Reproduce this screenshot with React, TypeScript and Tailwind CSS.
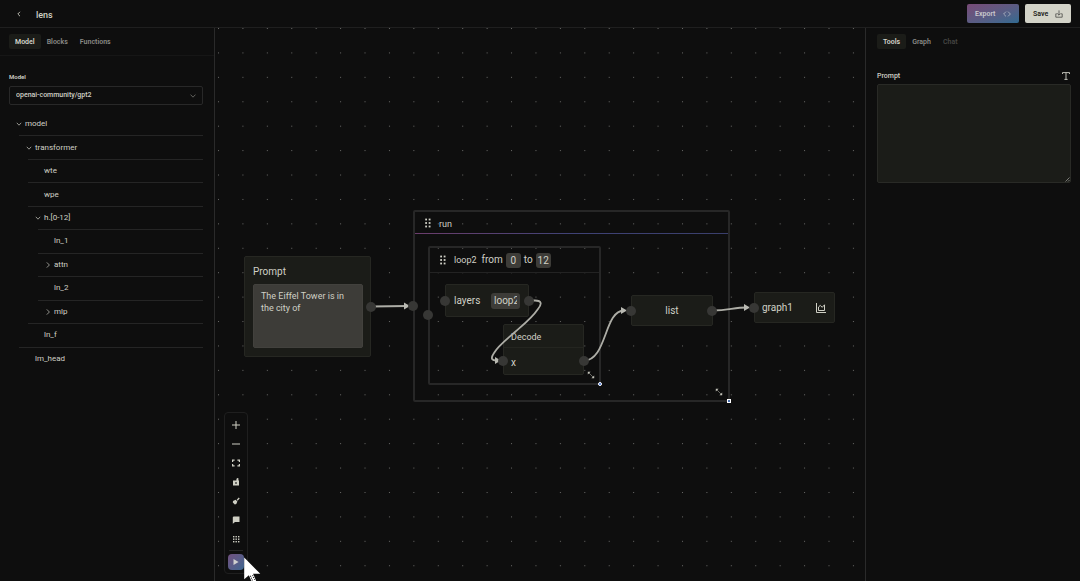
import type { ReactNode } from "react";

const MODEL_TREE: { name: string; depth: number; state: "open" | "closed" | "leaf" }[] = [
  { name: "model", depth: 0, state: "open" },
  { name: "transformer", depth: 1, state: "open" },
  { name: "wte", depth: 2, state: "leaf" },
  { name: "wpe", depth: 2, state: "leaf" },
  { name: "h.[0-12]", depth: 2, state: "open" },
  { name: "ln_1", depth: 3, state: "leaf" },
  { name: "attn", depth: 3, state: "closed" },
  { name: "ln_2", depth: 3, state: "leaf" },
  { name: "mlp", depth: 3, state: "closed" },
  { name: "ln_f", depth: 2, state: "leaf" },
  { name: "lm_head", depth: 1, state: "leaf" },
];

const INDENT = ["ml-[9px]", "ml-[19px] border-t", "ml-[28px] border-t", "ml-[38px] border-t"];

function Chevron({ open }: { open: boolean }) {
  return (
    <svg viewBox="0 0 6 6" className="h-1.5 w-1.5" fill="none" stroke="#a3a39c" strokeWidth="0.9">
      <path d={open ? "M0.8 1.8 3 4.2 5.2 1.8" : "M1.8 0.4 4.4 3 1.8 5.6"} />
    </svg>
  );
}

function Tab({ children, tone }: { children: ReactNode; tone: "active" | "idle" | "off" }) {
  const tones = {
    active: "bg-[#1b1c18] text-[#d6d6cc]",
    idle: "text-[#8a8a86]",
    off: "text-[#444442]",
  };
  return (
    <button
      type="button"
      disabled={tone === "off"}
      className={`h-[15px] rounded-xs px-1.5 pt-0.5 text-[7px] leading-[13px] font-semibold ${tones[tone]}`}
    >
      {children}
    </button>
  );
}

function Handle({ place }: { place: string }) {
  return <span className={`absolute h-2.5 w-2.5 rounded-full bg-[#373735] ${place}`} />;
}

function Grip() {
  return (
    <svg viewBox="0 0 6 10" className="h-2.5 w-1.5" fill="#d0d0c6">
      {[0.6, 4.1, 7.6].map((y) => (
        <g key={y}>
          <rect x="0.2" y={y} width="1.8" height="1.8" />
          <rect x="3.7" y={y} width="1.8" height="1.8" />
        </g>
      ))}
    </svg>
  );
}

function ResizeArrow({ place }: { place: string }) {
  return (
    <svg viewBox="0 0 8 8" className={`absolute h-2 w-2 ${place}`} fill="#c4c4ba">
      <path d="M0.8 0.8H3.6L0.8 3.600ZM7.2 7.2H4.400L7.2 4.400Z" />
      <path d="M2 2 6 6" stroke="#c4c4ba" strokeWidth="0.5" />
    </svg>
  );
}

function ToolButton({ label, children }: { label: string; children: ReactNode }) {
  return (
    <button type="button" aria-label={label} className="flex h-[19px] w-full items-center justify-center">
      <svg viewBox="0 0 8 8" className="h-2 w-2" fill="#cfcfc4">
        {children}
      </svg>
    </button>
  );
}

function Header() {
  return (
    <header className="flex h-7 shrink-0 items-center border-b border-[#1f1f1f] pr-[9px] pl-4">
      <button type="button" aria-label="Back" className="flex h-4 w-1.5 items-center">
        <svg viewBox="0 0 6 6" className="h-1.5 w-1.5" fill="none" stroke="#c8c8be" strokeWidth="0.9">
          <path d="M4 0.8 1.8 3 4 5.2" />
        </svg>
      </button>
      <h1 className="ml-3.5 flex-1 pt-0.5 text-[9px] leading-3 font-medium">lens</h1>
      <div className="flex gap-1.5">
        <button
          type="button"
          className="flex h-[19px] w-[52px] items-center justify-between rounded-xs bg-linear-to-br from-[#774a76] to-[#2f6a90] px-2 text-[7px] leading-3 font-semibold text-[#c9c9cf]"
        >
          <span className="pt-px">Export</span>
          <svg viewBox="0 0 8 6" className="h-1.5 w-2" fill="none" stroke="#b8bcc8" strokeWidth="0.8">
            <path d="M3 0.6 0.6 3 3 5.4M5 0.6 7.4 3 5 5.4" />
          </svg>
        </button>
        <button
          type="button"
          className="flex h-[19px] w-[46px] items-center justify-between rounded-xs bg-[#d3d3c8] px-2 text-[7px] leading-3 font-semibold text-[#1a1a18]"
        >
          <span className="pt-px">Save</span>
          <svg viewBox="0 0 8 8" className="h-2 w-2" fill="none" stroke="#4a4a46" strokeWidth="0.8">
            <path d="M4 0.4V5M2.2 3.4 4 5.2 5.8 3.4M1.8 3.8H0.8V7.2H7.2V3.8H6.2" />
          </svg>
        </button>
      </div>
    </header>
  );
}

function ModelPanel() {
  return (
    <aside className="w-[215px] shrink-0 border-r border-[#2a2a2a]">
      <nav className="flex h-7 items-start border-b border-[#161616] pt-1.5 pl-[9px]">
        <Tab tone="active">Model</Tab>
        <Tab tone="idle">Blocks</Tab>
        <Tab tone="idle">Functions</Tab>
      </nav>
      <div className="pt-4 pr-[11px] pl-[9px]">
        <label htmlFor="model" className="block h-[14px] text-[6px] leading-[10px] font-semibold">
          Model
        </label>
        <div className="relative">
          <select
            id="model"
            className="block h-[19px] w-full appearance-none rounded-xs border border-[#282828] bg-transparent pl-1.5 text-[7px] font-medium"
          >
            <option>openai-community/gpt2</option>
          </select>
          <svg
            viewBox="0 0 6 4"
            className="pointer-events-none absolute top-2 right-[7px] h-1 w-1.5"
            fill="none"
            stroke="#777772"
            strokeWidth="0.8"
          >
            <path d="M0.5 0.6 3 3.2 5.5 0.6" />
          </svg>
        </div>
      </div>
      <ul className="mt-[7px] grid h-[258px] grid-rows-11 pr-[11px]">
        {MODEL_TREE.map((item) => (
          <li key={item.name} className={`border-[#252525] ${INDENT[item.depth]}`}>
            <button type="button" className="flex h-full w-full items-center pl-[7px] text-[8px] leading-3">
              <span className="w-[9px]">{item.state !== "leaf" && <Chevron open={item.state === "open"} />}</span>
              {item.name}
            </button>
          </li>
        ))}
      </ul>
    </aside>
  );
}

function Wires() {
  return (
    <svg className="pointer-events-none absolute inset-0 h-full w-full" fill="none" stroke="#adada6" strokeWidth="1.8">
      <path d="M156 278.500 192 278" />
      <path d="M314 272.500 H320 C327 272.500 327 276 323 281 C317 290 308 297 300 304 C291 312 283 318 279 325 C275 331 277 332.500 282 332.500" />
      <path d="M369 332.500 C392 332.500 389 282.500 409 282.500" />
      <path d="M498 282.500 C513 282.500 519 279.500 532 279.500" />
      <g fill="#b9b9b2" stroke="none">
        <path d="M189 274.500 195 278 189 281.500Z" />
        <path d="M280 329 286 332.500 280 336Z" />
        <path d="M406 279 412 282.500 406 286Z" />
        <path d="M529 276 535 279.500 529 283Z" />
      </g>
    </svg>
  );
}

function Canvas() {
  const node = "absolute rounded-xs border border-[#262722] bg-[#1b1c18]";
  const chip = "h-[15px] w-[15px] rounded-[3px] bg-[#3d3c38] text-center";
  return (
    <main className="relative min-w-0 flex-1 overflow-hidden text-[10px]">
      <svg className="absolute inset-0 h-full w-full">
        <defs>
          <pattern id="dots" x="3" y="0" width="24.42" height="24.42" patternUnits="userSpaceOnUse">
            <rect x="0" y="0" width="1" height="1" fill="#6a6a68" />
          </pattern>
        </defs>
        <rect width="100%" height="100%" fill="url(#dots)" />
      </svg>

      <section className="absolute top-[182px] left-[198px] h-[192px] w-[317px] rounded-xs border-2 border-[#272727]">
        <header className="flex h-[21px] items-center gap-2 pl-2.5 text-[9px] leading-3">
          <Grip />
          <span className="pt-0.5">run</span>
        </header>
        <div className="h-px bg-linear-to-r from-[#6b3d6c] via-[#3f4276] to-[#3a3f6c]" />
        <ResizeArrow place="right-[5px] bottom-1" />
        <span className="absolute -right-[3px] -bottom-[3px] h-1 w-1 border border-white bg-[#4a6fb0]" />
      </section>

      <section className="absolute top-[218px] left-[213px] h-[139px] w-[173px] rounded-xs border-2 border-[#272727]">
        <header className="flex h-[25px] items-center gap-[3px] border-b border-[#232323] pl-2.5 leading-3">
          <Grip />
          <span className="pr-0.5 pl-[5px] text-[9px]">loop2</span>
          <label htmlFor="from">from</label>
          <input id="from" defaultValue="0" className={chip} />
          <label htmlFor="to">to</label>
          <input id="to" defaultValue="12" className={chip} />
        </header>
        <ResizeArrow place="right-1 bottom-1" />
        <span className="absolute -right-[3px] -bottom-[3px] h-1 w-1 rounded-full border border-white bg-[#3367d6]" />
      </section>

      <section className={`${node} top-[228px] left-[29px] h-[101px] w-[127px] pt-2 pr-[7px] pl-2`}>
        <label htmlFor="node-prompt" className="block leading-[14px]">
          Prompt
        </label>
        <textarea
          id="node-prompt"
          defaultValue="The Eiffel Tower is in the city of"
          className="mt-[5px] block h-16 w-full resize-none rounded-xs border border-[#42413d] bg-[#3d3c38] px-[7px] pt-[5px] text-[9px] leading-3"
        />
      </section>

      <section className={`${node} top-[256px] left-[230px] flex h-[33px] w-[84px] items-center pr-2 pl-2`}>
        <label htmlFor="layers" className="flex-1">
          layers
        </label>
        <input id="layers" defaultValue="loop2" className="h-4 w-[29px] rounded-[3px] bg-[#3d3c38] pr-[3px] pl-[3px]" />
      </section>

      <section className={`${node} top-[296px] left-[288px] h-[51px] w-[81px]`}>
        <h2 className="h-[23px] border-b border-[#242520] pt-[5px] pl-[7px] text-[9px] leading-[14px]">Decode</h2>
        <p className="flex h-7 items-center pl-[7px]">x</p>
      </section>

      <section className={`${node} top-[267px] left-[416px] flex h-[31px] w-[82px] items-center justify-center`}>
        list
      </section>

      <section
        className={`${node} top-[264px] left-[539px] flex h-[31px] w-[81px] items-center justify-between pr-2 pl-[7px]`}
      >
        graph1
        <svg viewBox="0 0 10 10" className="h-2.5 w-2.5" fill="none" stroke="#cfcfc4" strokeWidth="1">
          <path d="M0.5 0V9.500H10M2.500 7.500V4L4.300 2.400 6.200 4.300 8.500 1.800V7.500Z" />
        </svg>
      </section>

      <Wires />
      <Handle place="top-[274px] left-[151px]" />
      <Handle place="top-[273px] left-[193px]" />
      <Handle place="top-[282px] left-[208px]" />
      <Handle place="top-[268px] left-[225px]" />
      <Handle place="top-[268px] left-[309px]" />
      <Handle place="top-[328px] left-[283px]" />
      <Handle place="top-[328px] left-[364px]" />
      <Handle place="top-[278px] left-[411px]" />
      <Handle place="top-[278px] left-[492px]" />
      <Handle place="top-[275px] left-[534px]" />

      <div className="absolute bottom-[7px] left-[9px] flex w-6 flex-col items-center rounded-sm border border-[#1f1f1f] bg-[#0e0e0e] px-1 pt-0.5 pb-[3px]">
        <ToolButton label="Zoom in">
          <path d="M3.500 0h1v3.500H8v1H4.500V8h-1V4.500H0v-1h3.500z" />
        </ToolButton>
        <ToolButton label="Zoom out">
          <path d="M0 3.500h8v1H0z" />
        </ToolButton>
        <ToolButton label="Fit view">
          <path d="M0 0.500h2.600v1.200H1.200v1.300H0zM5.400 0.500H8V3H6.800V1.700H5.400zM0 5h1.200v1.300h1.400v1.200H0zM6.800 5H8v2.500H5.400V6.300h1.400z" />
        </ToolButton>
        <ToolButton label="Unlock">
          <path
            fillRule="evenodd"
            d="M1 2.600h3.400V1.500a1.400 1.400 0 0 1 2-1.300V2.600H7v5H1zM3.300 4.300v1.500h1.400V4.300z"
          />
        </ToolButton>
        <ToolButton label="Clean up">
          <path d="M6.800 0.600 7.700 1.500 5.600 3.700 4.700 2.800zM3.600 2.800 5.400 4.600 4.300 7 2.800 7.500 0.800 5.500 1 3.900z" />
        </ToolButton>
        <ToolButton label="Comment">
          <path d="M1.500 0.500H7.500V6H3L0.800 7.700V1.200z" />
        </ToolButton>
        <ToolButton label="Grid">
          {[1, 3.500, 6].map((y) =>
            [1, 3.500, 6].map((x) => <rect key={`${x}-${y}`} x={x} y={y} width="1.400" height="1.400" />),
          )}
        </ToolButton>
        <div className="mt-0.5 h-px w-full bg-[#262626]" />
        <button
          type="button"
          aria-label="Run"
          className="mt-[3px] flex h-4 w-4 items-center justify-center rounded-sm bg-linear-to-br from-[#70507f] to-[#3a6690]"
        >
          <svg viewBox="0 0 6 6" className="h-1.5 w-1.5" fill="#d0d0cf">
            <path d="M0.500 0 5.600 3 0.500 6z" />
          </svg>
        </button>
      </div>
      <svg viewBox="0 0 17 25" className="pointer-events-none absolute -bottom-0.5 left-7 h-[26px] w-[18px]">
        <path d="M1 0.500V21.500L5.500 17.500 8.500 24.500 12.500 22.800 9.500 16.200H16.500Z" fill="#fff" />
        <path d="M7 18 9.500 24M9 17.500 11.500 22.500" stroke="#111" strokeWidth="1" strokeDasharray="1 1" />
      </svg>
    </main>
  );
}

function ToolsPanel() {
  return (
    <aside className="w-[215px] shrink-0 border-l border-[#2a2a2a] pr-[9px] pl-[11px]">
      <nav className="flex h-7 items-start pt-1.5">
        <Tab tone="active">Tools</Tab>
        <Tab tone="idle">Graph</Tab>
        <Tab tone="off">Chat</Tab>
      </nav>
      <div className="mt-3 flex h-4 items-center justify-between pr-px">
        <label htmlFor="prompt" className="text-[7px] font-medium">
          Prompt
        </label>
        <svg viewBox="0 0 8 8" className="h-2 w-2" fill="none" stroke="#d0d0c6" strokeWidth="0.9">
          <path d="M0.500 2V0.600H7.500V2M4 0.600V7.400M2.400 7.400H5.600" />
        </svg>
      </div>
      <div className="relative">
        <textarea
          id="prompt"
          className="block h-[99px] w-full resize-none rounded-xs border border-[#292a26] bg-[#1b1c18] p-1.5 text-[7px]"
        />
        <svg viewBox="0 0 5 5" className="pointer-events-none absolute right-px bottom-px h-[5px] w-[5px]" stroke="#a5a5a0" strokeWidth="0.7">
          <path d="M0.500 4.500 4.500 0.500M3 4.500 4.500 3" />
        </svg>
      </div>
    </aside>
  );
}

export default function App() {
  return (
    <div className="flex h-screen flex-col overflow-hidden bg-[#0e0e0e] font-[Roboto,sans-serif] text-[#d0d0c6]">
      <Header />
      <div className="flex min-h-0 flex-1">
        <ModelPanel />
        <Canvas />
        <ToolsPanel />
      </div>
    </div>
  );
}
